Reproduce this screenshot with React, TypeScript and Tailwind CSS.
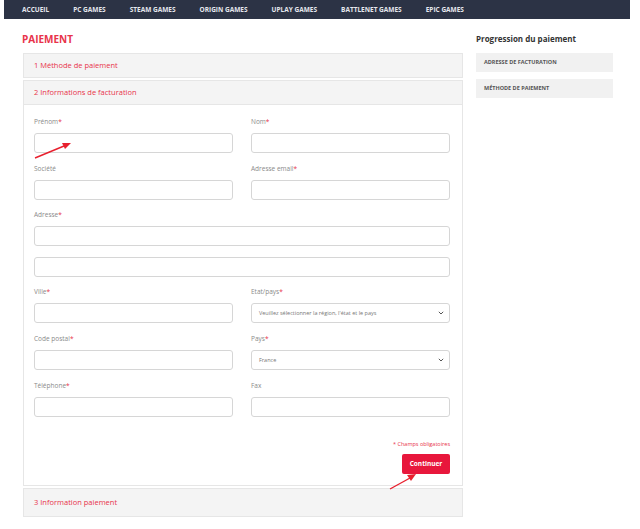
import React from 'react'

const navItems = ['ACCUEIL', 'PC GAMES', 'STEAM GAMES', 'ORIGIN GAMES', 'UPLAY GAMES', 'BATTLENET GAMES', 'EPIC GAMES']

const font = { fontFamily: '"Open Sans", "Noto Sans", sans-serif' }

function Label({ text, required }: { text: string; required?: boolean }) {
  return (
    <div className="h-[10px] mb-[6px] text-[6.5px] leading-[10px] text-[#8a8a8a]">
      {text}
      {required && <span className="text-[#e8334a]">*</span>}
    </div>
  )
}

function Input() {
  return <div className="h-[20px] rounded-[3px] border border-[#d6d6d6] bg-white" />
}

function Select({ value }: { value: string }) {
  return (
    <div className="h-[20px] rounded-[3px] border border-[#d6d6d6] bg-white flex items-center justify-between pl-[7px] pr-[5px]">
      <span className="text-[5.5px] text-[#777]">{value}</span>
      <svg width="6" height="4" viewBox="0 0 6 4">
        <path d="M0.8 0.8 L3 3 L5.2 0.8" stroke="#555" strokeWidth="1" fill="none" />
      </svg>
    </div>
  )
}

function Field({ label, required, select }: { label: string; required?: boolean; select?: string }) {
  return (
    <div>
      <Label text={label} required={required} />
      {select ? <Select value={select} /> : <Input />}
    </div>
  )
}

function SectionHeader({ text }: { text: string }) {
  return (
    <div className="h-[25px] flex items-center px-[10px] bg-[#f4f4f4] border border-[#e6e6e6] text-[7.5px] text-[#e8334a]">
      {text}
    </div>
  )
}

export default function App() {
  return (
    <div className="relative w-[640px] h-[529px] bg-white overflow-hidden" style={font}>
      <div className="mx-[4px] h-[19px] bg-[#2c3345] flex items-center pl-[18px] w-[626px]">
        <div className="w-[442px] flex justify-between">
          {navItems.map(n => (
            <span key={n} className="text-[6.5px] font-bold text-[#e6e8ee]">{n}</span>
          ))}
        </div>
      </div>

      <div className="flex pl-[23px] pt-[13px]">
        <div className="w-[440px]">
          <h1 className="text-[10px] font-bold text-[#e8334a] leading-[14px] ml-[-1px]">PAIEMENT</h1>
          <div className="mt-[7px] flex flex-col gap-[2px]">
            <SectionHeader text="1 Méthode de paiement" />
            <div>
              <SectionHeader text="2 Informations de facturation" />
              <div className="border border-t-0 border-[#e6e6e6] pl-[10px] pr-[12px] pt-[12px] pb-[11px]">
                <div className="grid grid-cols-2 gap-x-[18px] gap-y-[10.6px]">
                  <Field label="Prénom" required />
                  <Field label="Nom" required />
                  <Field label="Société" />
                  <Field label="Adresse email" required />
                  <div className="col-span-2">
                    <Field label="Adresse" required />
                  </div>
                  <div className="col-span-2">
                    <Input />
                  </div>
                  <Field label="Ville" required />
                  <Field label="Etat/pays" required select="Veuillez sélectionner la région, l'état et le pays" />
                  <Field label="Code postal" required />
                  <Field label="Pays" required select="France" />
                  <Field label="Téléphone" required />
                  <Field label="Fax" />
                </div>
                <div className="mt-[23px] flex flex-col items-end">
                  <span className="text-[5.5px] text-[#e8334a]">* Champs obligatoires</span>
                  <button className="mt-[6px] h-[20px] w-[48px] rounded-[2px] bg-[#e8173c] text-white text-[6.5px] font-bold">
                    Continuer
                  </button>
                </div>
              </div>
            </div>
            <div className="h-[29px] flex items-center px-[10px] bg-[#f4f4f4] border border-[#e6e6e6] text-[7.5px] text-[#e8334a]">
              3 Information paiement
            </div>
          </div>
        </div>

        <div className="ml-[13px] w-[137px] pt-[2px]">
          <div className="text-[8px] font-bold text-[#333] leading-[10px]">Progression du paiement</div>
          <div className="mt-[9px] flex flex-col gap-[7px]">
            <div className="h-[19px] bg-[#f1f1f1] flex items-center px-[8px] text-[5.5px] font-bold text-[#555]">ADRESSE DE FACTURATION</div>
            <div className="h-[19px] bg-[#f1f1f1] flex items-center px-[8px] text-[5.5px] font-bold text-[#555]">MÉTHODE DE PAIEMENT</div>
          </div>
        </div>
      </div>

      <svg className="absolute left-0 top-0 pointer-events-none" width="640" height="529">
        <line x1="35" y1="158" x2="64" y2="146" stroke="#e8202e" strokeWidth="1.4" />
        <polygon points="71,143 62,143 65,149" fill="#e8202e" />
        <line x1="390" y1="489" x2="410" y2="478" stroke="#e8202e" strokeWidth="1.4" />
        <polygon points="416,474 407,475 411,481" fill="#e8202e" />
      </svg>
    </div>
  )
}
